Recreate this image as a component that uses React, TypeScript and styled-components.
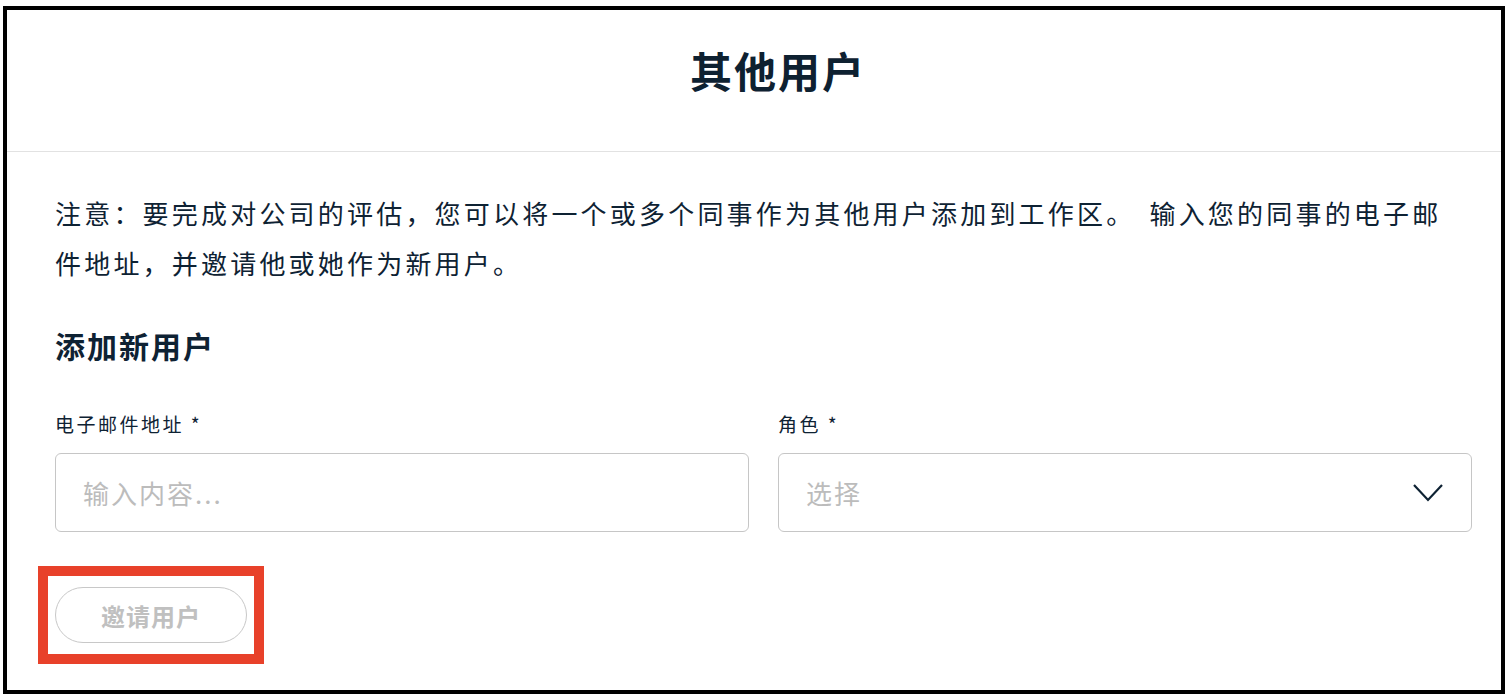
import React from "react";
import styled, { createGlobalStyle } from "styled-components";

const Global = createGlobalStyle`
  html, body { margin: 0; padding: 0; background: #ffffff; }
  body {
    font-family: "Noto Sans CJK SC", "Noto Sans", sans-serif;
    color: #0e2233;
  }
  * { box-sizing: border-box; }
`;

const Page = styled.div`
  padding: 6px 5px 2px 3px;
`;

const Frame = styled.div`
  width: 1502px;
  height: 688px;
  border: 4px solid #000;
  background: #fff;
  display: flex;
  flex-direction: column;
`;

const Header = styled.header`
  height: 142px;
  flex: none;
  display: flex;
  align-items: center;
  justify-content: center;
  border-bottom: 1px solid #e2e2e2;
  padding: 0 0 22px 48px;
`;

const Title = styled.h1`
  margin: 0;
  font-size: 42px;
  font-weight: 700;
  letter-spacing: 2px;
  line-height: 1;
  color: #0e2131;
`;

const Body = styled.main`
  padding: 36px 29px 0 48px;
  display: flex;
  flex-direction: column;
`;

const Note = styled.p`
  margin: 0;
  font-size: 26px;
  letter-spacing: 3.2px;
  word-spacing: 5px;
  line-height: 50px;
  width: 1410px;
`;

const SectionTitle = styled.h2`
  margin: 37px 0 0;
  font-size: 30px;
  font-weight: 700;
  letter-spacing: 2px;
  line-height: 40px;
`;

const Fields = styled.div`
  margin-top: 47px;
  display: grid;
  grid-template-columns: 1fr 1fr;
  column-gap: 29px;
`;

const Field = styled.div`
  display: flex;
  flex-direction: column;
  gap: 17px;
`;

const Label = styled.label`
  font-size: 19px;
  letter-spacing: 2.5px;
  line-height: 24px;
`;

const Control = styled.div`
  position: relative;
  height: 79px;
  border: 1px solid #c6c6c6;
  border-radius: 6px;
  display: flex;
  align-items: center;
  justify-content: space-between;
  padding: 0 27px 0 27px;
`;

const Placeholder = styled.span`
  font-size: 26px;
  letter-spacing: 2px;
  color: #bcbcbc;
`;

const Actions = styled.div`
  margin-top: 55px;
  display: flex;
`;

const Highlight = styled.div`
  position: relative;
`;

const Annotation = styled.div`
  position: absolute;
  left: -17px;
  top: -21px;
  right: -17px;
  bottom: -21px;
  border: 10px solid #e8412a;
  pointer-events: none;
`;

const InviteButton = styled.button`
  width: 192px;
  height: 56px;
  border: 1px solid #c8c8c8;
  border-radius: 28px;
  background: #fff;
  font-family: "Noto Sans CJK SC", sans-serif;
  font-size: 24px;
  font-weight: 700;
  letter-spacing: 1px;
  color: #c0c0c0;
  display: flex;
  align-items: center;
  justify-content: center;
  padding: 0;
`;

const Chevron = () => (
  <svg width="32" height="20" viewBox="0 0 32 20" fill="none">
    <polyline points="2,2 16,17 30,2" stroke="#0e2233" strokeWidth="2.2" />
  </svg>
);

export default function App() {
  return (
    <>
      <Global />
      <Page>
        <Frame>
          <Header>
            <Title>其他用户</Title>
          </Header>
          <Body>
            <Note>
              注意：要完成对公司的评估，您可以将一个或多个同事作为其他用户添加到工作区。 输入您的同事的电子邮件地址，并邀请他或她作为新用户。
            </Note>
            <SectionTitle>添加新用户</SectionTitle>
            <Fields>
              <Field>
                <Label>电子邮件地址 *</Label>
                <Control>
                  <Placeholder>输入内容...</Placeholder>
                </Control>
              </Field>
              <Field>
                <Label>角色 *</Label>
                <Control>
                  <Placeholder>选择</Placeholder>
                  <Chevron />
                </Control>
              </Field>
            </Fields>
            <Actions>
              <Highlight>
                <InviteButton>邀请用户</InviteButton>
                <Annotation />
              </Highlight>
            </Actions>
          </Body>
        </Frame>
      </Page>
    </>
  );
}
